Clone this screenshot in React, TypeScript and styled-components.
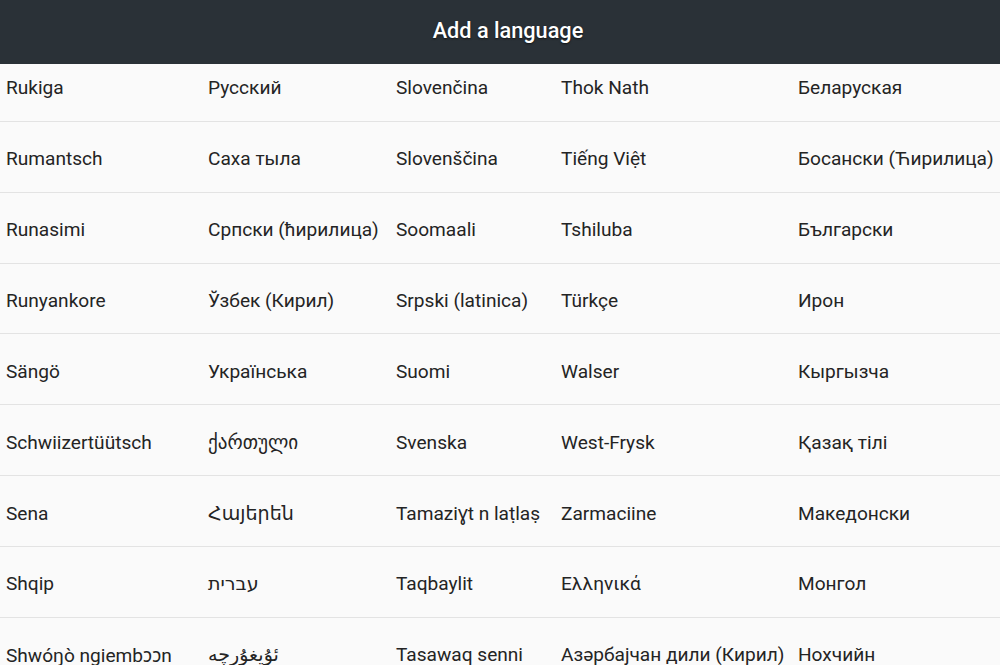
import React from 'react';
import styled, { createGlobalStyle } from 'styled-components';

const rows: string[][] = [
  ['Rukiga', 'Русский', 'Slovenčina', 'Thok Nath', 'Беларуская'],
  ['Rumantsch', 'Саха тыла', 'Slovenščina', 'Tiếng Việt', 'Босански (Ћирилица)'],
  ['Runasimi', 'Српски (ћирилица)', 'Soomaali', 'Tshiluba', 'Български'],
  ['Runyankore', 'Ўзбек (Кирил)', 'Srpski (latinica)', 'Türkçe', 'Ирон'],
  ['Sängö', 'Українська', 'Suomi', 'Walser', 'Кыргызча'],
  ['Schwiizertüütsch', 'ქართული', 'Svenska', 'West-Frysk', 'Қазақ тілі'],
  ['Sena', 'Հայերեն', 'Tamaziɣt n laṭlaṣ', 'Zarmaciine', 'Македонски'],
  ['Shqip', 'עברית', 'Taqbaylit', 'Ελληνικά', 'Монгол'],
  ['Shwóŋò ngiembɔɔn', 'ئۇيغۇرچە', 'Tasawaq senni', 'Азәрбајчан дили (Кирил)', 'Нохчийн'],
];

const GlobalStyle = createGlobalStyle`
  html, body {
    margin: 0;
    padding: 0;
    background: #fafafa;
    overflow: hidden;
  }
  body {
    font-family: Roboto, "Noto Sans", "DejaVu Sans", sans-serif;
  }
`;

const Page = styled.div`
  display: flex;
  flex-direction: column;
  width: 1000px;
  height: 665px;
  background: #fafafa;
`;

const Header = styled.header`
  flex: 0 0 64px;
  display: flex;
  align-items: center;
  justify-content: center;
  background: #2a3137;
  color: #ffffff;
  font-size: 21.7px;
  font-weight: 500;
  text-shadow: 0 1px 2px rgba(0, 0, 0, 0.6);
  padding: 0 0 4px 16px;
  box-sizing: border-box;
`;

const Viewport = styled.div`
  flex: 1;
  overflow: hidden;
`;

const List = styled.div`
  margin-top: -13px;
`;

const Row = styled.div`
  display: grid;
  grid-template-columns: 202px 188px 165px 237px 208px;
  align-items: center;
  height: 70.86px;
  box-sizing: border-box;
  border-bottom: 1px solid #e3e3e3;
`;

const Cell = styled.div`
  padding: 4px 0 0 6px;
  font-size: 19.1px;
  color: #242424;
  white-space: nowrap;
  font-family: Roboto, "Noto Sans", "DejaVu Sans", "Noto Sans CJK SC", sans-serif;
`;

export default function App() {
  return (
    <Page>
      <GlobalStyle />
      <Header>Add a language</Header>
      <Viewport>
        <List>
          {rows.map((row, i) => (
            <Row key={i}>
              {row.map((name, j) => (
                <Cell key={j}>{name}</Cell>
              ))}
            </Row>
          ))}
        </List>
      </Viewport>
    </Page>
  );
}
